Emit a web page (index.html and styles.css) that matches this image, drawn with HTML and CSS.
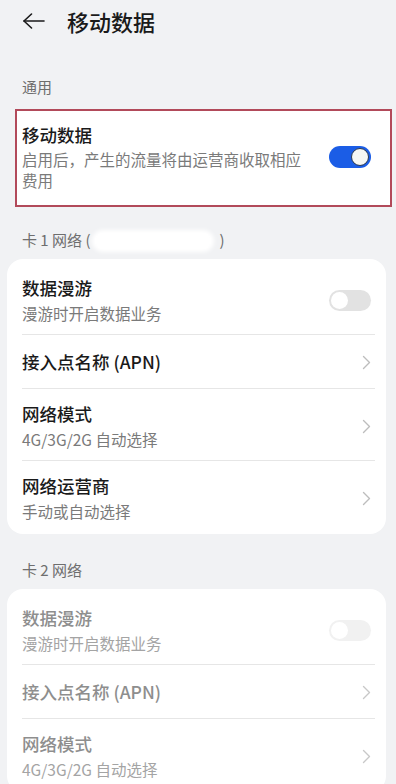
FILE: index.html
```html
<!DOCTYPE html>
<html lang="zh-CN">
<head>
  <meta charset="UTF-8">
  <meta name="viewport" content="width=device-width, initial-scale=1.0">
  <title>移动数据</title>
  <link rel="stylesheet" href="styles.css">
</head>
<body>
  <!-- Title bar -->
  <header class="title-bar">
    <svg class="back" width="22" height="16" viewBox="0 0 22 16" fill="none" stroke="#1a1a1a" stroke-width="1.6" stroke-linecap="round" stroke-linejoin="round">
      <path d="M8.5 1 L1 8 L8.5 15" />
      <path d="M1 8 H21" />
    </svg>
    <h1>移动数据</h1>
  </header>

  <!-- General -->
  <div class="section-label first">通用</div>
  <div class="highlight">
    <div class="row-text">
      <div class="row-title">移动数据</div>
      <div class="row-sub wrap">启用后，产生的流量将由运营商收取相应费用</div>
    </div>
    <span class="switch on"></span>
  </div>

  <!-- SIM 1 -->
  <div class="section-label">卡 1 网络 (<span class="masked"></span>)</div>
  <section class="card">
    <div class="row">
      <div class="row-text">
        <div class="row-title">数据漫游</div>
        <div class="row-sub">漫游时开启数据业务</div>
      </div>
      <span class="switch"></span>
    </div>
    <div class="row single">
      <div class="row-text">
        <div class="row-title">接入点名称 (APN)</div>
      </div>
      <svg class="chevron" width="9" height="15" viewBox="0 0 9 15"><path d="M1.5 1.5 L7.5 7.5 L1.5 13.5" /></svg>
    </div>
    <div class="row">
      <div class="row-text">
        <div class="row-title">网络模式</div>
        <div class="row-sub">4G/3G/2G 自动选择</div>
      </div>
      <svg class="chevron" width="9" height="15" viewBox="0 0 9 15"><path d="M1.5 1.5 L7.5 7.5 L1.5 13.5" /></svg>
    </div>
    <div class="row">
      <div class="row-text">
        <div class="row-title">网络运营商</div>
        <div class="row-sub">手动或自动选择</div>
      </div>
      <svg class="chevron" width="9" height="15" viewBox="0 0 9 15"><path d="M1.5 1.5 L7.5 7.5 L1.5 13.5" /></svg>
    </div>
  </section>

  <!-- SIM 2 (disabled) -->
  <div class="section-label">卡 2 网络</div>
  <section class="card disabled">
    <div class="row">
      <div class="row-text">
        <div class="row-title">数据漫游</div>
        <div class="row-sub">漫游时开启数据业务</div>
      </div>
      <span class="switch"></span>
    </div>
    <div class="row single">
      <div class="row-text">
        <div class="row-title">接入点名称 (APN)</div>
      </div>
      <svg class="chevron" width="9" height="15" viewBox="0 0 9 15"><path d="M1.5 1.5 L7.5 7.5 L1.5 13.5" /></svg>
    </div>
    <div class="row">
      <div class="row-text">
        <div class="row-title">网络模式</div>
        <div class="row-sub">4G/3G/2G 自动选择</div>
      </div>
      <svg class="chevron" width="9" height="15" viewBox="0 0 9 15"><path d="M1.5 1.5 L7.5 7.5 L1.5 13.5" /></svg>
    </div>
  </section>
</body>
</html>
```

FILE: styles.css
```css
body {
  margin: 0;
  padding: 0;
  background-color: #f1f2f4;
  font-family: "Noto Sans CJK SC", "Noto Sans", sans-serif;
  color: #1a1a1a;
  overflow: hidden;
}

.title-bar {
  height: 42px;
  display: flex;
  align-items: center;
  padding-left: 23px;
  gap: 22px;

  h1 {
    margin: 0;
    font-size: 22px;
    line-height: 42px;
    font-weight: 500;
    color: #1a1a1a;
  }
}

.section-label {
  margin: 23px 0 9px 22px;
  font-size: 15px;
  line-height: 20px;
  color: #6e6e6e;

  &.first {
    margin-top: 35px;
    margin-bottom: 12px;
  }
}

.card + .section-label {
  margin-top: 26px;
}

.masked {
  display: inline-block;
  width: 116px;
  height: 16px;
  margin: 0 8px 0 5px;
  vertical-align: -3px;
  background: #fff;
  border-radius: 8px;
  box-shadow: 0 0 4px 3px #fff;
}

.highlight {
  margin: 0 4px 0 15px;
  border: 2px solid #b24a5a;
  background: #fff;
  padding: 12px 19px 14px 5px;
  display: flex;
  align-items: center;
  gap: 20px;

  .row-title {
    line-height: 24px;
  }

  .row-sub {
    margin-top: 2px;
    line-height: 21px;
  }
}

.card {
  margin: 0 10px 0 7px;
  background: #fff;
  border-radius: 16px;
  padding: 4px 0 2px;
}

.row {
  margin: 0 11px 0 15px;
  padding: 13px 0 10px;
  border-bottom: 1px solid #e6e6e6;
  display: flex;
  align-items: center;
  gap: 16px;

  &:last-child {
    border-bottom: none;
  }

  &.single {
    padding: 15px 0 14px;
  }

  .switch {
    margin-right: 4px;
  }
}

.row-text {
  flex: 1;
  min-width: 0;
}

.row-title {
  font-size: 17.5px;
  line-height: 24px;
  font-weight: 500;
  color: #1a1a1a;
}

.row-sub {
  margin-top: 2px;
  font-size: 15.5px;
  line-height: 22px;
  color: #7a7a7a;
}

.chevron {
  flex: none;
  margin-right: 4px;

  path {
    fill: none;
    stroke: #bdbdbd;
    stroke-width: 1.4;
    stroke-linecap: round;
    stroke-linejoin: round;
  }
}

.switch {
  flex: none;
  position: relative;
  width: 42px;
  height: 21px;
  border-radius: 11px;
  background: #e2e2e2;

  &::after {
    content: "";
    position: absolute;
    top: 2px;
    left: 2px;
    width: 17px;
    height: 17px;
    border-radius: 50%;
    background: #fff;
  }

  &.on {
    height: 22px;
    background: #1b5de6;

    &::after {
      left: auto;
      right: 2px;
      top: 2px;
      width: 16px;
      height: 16px;
      border: 1px solid #2b3950;
      background: #f6f7f4;
    }
  }
}

.disabled {
  .row-title {
    color: #8e8e8e;
  }

  .row-sub {
    color: #a4a4a4;
  }

  .switch {
    background: #f1f1f1;
  }

  .chevron path {
    stroke: #c8c8c8;
  }
}
```
